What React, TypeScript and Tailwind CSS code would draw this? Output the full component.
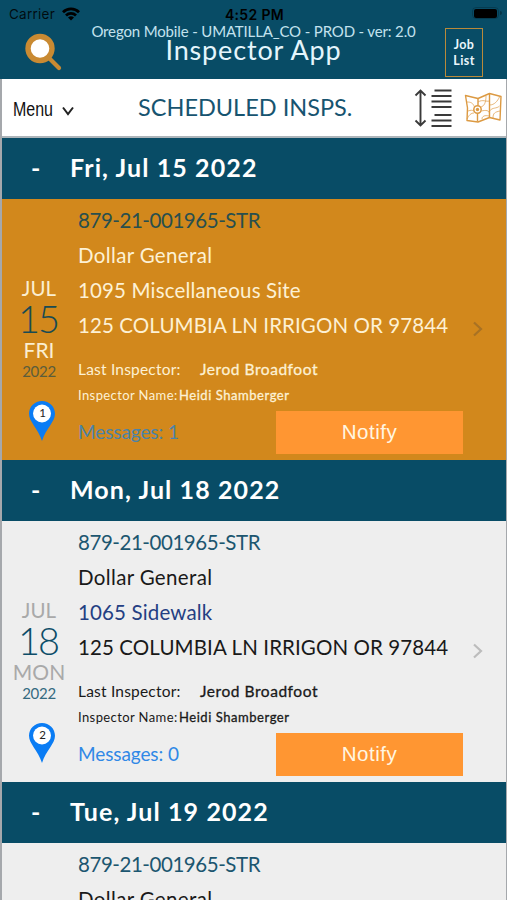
import clsx from 'clsx';

interface Inspection {
  heading: string;
  month: string;
  day: string;
  weekday: string;
  year: string;
  record: string;
  business: string;
  site: string;
  address: string;
  lastInspector: string;
  inspectorName: string;
  messages: number;
  pin: number;
  selected?: boolean;
}

const shared = {
  month: 'JUL',
  year: '2022',
  record: '879-21-001965-STR',
  business: 'Dollar General',
  address: '125 COLUMBIA LN IRRIGON OR 97844',
  lastInspector: 'Jerod Broadfoot',
  inspectorName: 'Heidi Shamberger',
};

const inspections: Inspection[] = [
  { ...shared, heading: 'Fri, Jul 15 2022', day: '15', weekday: 'FRI', site: '1095 Miscellaneous Site', messages: 1, pin: 1, selected: true },
  { ...shared, heading: 'Mon, Jul 18 2022', day: '18', weekday: 'MON', site: '1065 Sidewalk', messages: 0, pin: 2 },
  { ...shared, heading: 'Tue, Jul 19 2022', day: '19', weekday: 'TUE', site: '1065 Sidewalk', messages: 0, pin: 3 },
];

function StatusBar() {
  return (
    <div className="flex h-[26px] items-center justify-between pl-[9px] pr-[5px] font-['Inter',sans-serif] text-black">
      <div className="flex w-[150px] items-center gap-[7px] pt-[2px]">
        <span className="text-[13.5px] tracking-[0.25px] text-black/85">Carrier</span>
        <svg width="18" height="14" viewBox="0 0 18 14" fill="none" stroke="currentColor" strokeWidth="2.8">
          <path d="M1 5.2a11.4 11.4 0 0 1 16 0" />
          <path d="M4 8.4a7.2 7.2 0 0 1 10 0" />
          <path d="M9 13.6 6 10.6a4.3 4.3 0 0 1 6 0z" fill="currentColor" stroke="none" />
        </svg>
      </div>
      <span className="pt-[2px] pr-[2px] text-[14px] font-semibold tracking-[0.35px]">4:52 PM</span>
      <div className="flex w-[150px] items-center justify-end">
        <div className="flex h-[12px] w-[27px] items-center justify-center rounded-[4px] border border-black/20">
          <div className="h-[9px] w-[23px] rounded-[2px] bg-black" />
        </div>
        <div className="ml-px h-1 w-[2px] rounded-r bg-black/30" />
      </div>
    </div>
  );
}

function Header() {
  return (
    <header className="h-[79px] bg-[#084c66]">
      <StatusBar />
      <div className="flex h-[53px] justify-between pl-[24px] pr-[24px]">
        <svg className="mt-[6px] shrink-0" width="38" height="40" viewBox="0 0 38 40" fill="none">
          <path d="m25 26 10 10" stroke="#c98a32" strokeWidth="4.2" strokeLinecap="round" />
          <circle cx="16" cy="16.5" r="12" fill="#fff" stroke="#c98a32" strokeWidth="5.4" />
        </svg>
        <div className="-mt-[3px] flex flex-col items-center whitespace-nowrap text-[#c3e2ee]">
          <span className="text-[15px] leading-[16px] tracking-[-0.15px]">Oregon Mobile - UMATILLA_CO - PROD - ver: 2.0</span>
          <h1 className="text-[27px] leading-[22px] tracking-[0.85px] text-[#e4f5fc]">Inspector App</h1>
        </div>
        <button className="mt-[2px] h-[49px] w-[38px] border border-[#b98a3a] text-center text-[12.5px] font-bold leading-[16px] tracking-[0.4px] text-[#eaf6fb]">
          Job<br />List
        </button>
      </div>
    </header>
  );
}

function SortIcon() {
  return (
    <svg width="38" height="40" viewBox="0 0 38 40" fill="none" stroke="#3a3a3a" strokeWidth="1.9">
      <path d="M6.5 3v34M1.5 7.5l5-5 5 5M1.5 32.5l5 5 5-5" />
      <path d="M20.5 2.5h17M17.5 8h20M17.5 13.5h20M17.5 19h20M20.5 27h17M17.5 32.500h20M17.5 38h20" />
    </svg>
  );
}

function MapIcon() {
  return (
    <svg width="38" height="32" viewBox="0 0 38 32" fill="none" stroke="#dc9a43" strokeWidth="1.4" strokeLinejoin="round">
      <path d="M1.5 3.5 14 6.500 25.500 1.500 37 4.500 36 28 25.500 25.500 14 30 3 28.500 3.500 16z" />
      <path d="M14 6.500v7M13.500 21v8.500M25.500 1.500v24" />
      <circle cx="13.500" cy="17.500" r="3.700" strokeWidth="1.500" />
      <circle cx="13.500" cy="17.500" r="1.700" fill="#dc9a43" stroke="none" />
      <path d="M3 10c4 0 6 1 7.500 5M4 19c3-1 4-1 6 0M3 27c2-4 4-6 7-6M17 15c3-1 5-4 5-11M17.500 19c4-1 8-1 8 3M14 10c5-3 8 0 11.500-1M25.500 13c5 0 8-4 10-8M25.500 19c3-4 7-2 10-5M29 26c0-5 2-6 7-7M18 27c0-3 3-4 7-3" strokeWidth=".7" />
    </svg>
  );
}

function Toolbar() {
  return (
    <div className="flex h-[59px] items-center border-b-2 border-[#adb5ba] bg-white">
      <button className="flex w-[127px] items-center pl-[11px] pt-[4px]">
        <span className="w-[40px] origin-left scale-x-[0.82] font-['Liberation_Sans',sans-serif] text-[19.5px] text-[#111]">Menu</span>
        <svg className="ml-[9px] mt-[2px]" width="12" height="10" viewBox="0 0 12 10" fill="none" stroke="#222" strokeWidth="2">
          <path d="m1 1.5 5 6.500 5-6.500" />
        </svg>
      </button>
      <h2 className="w-[232px] whitespace-nowrap pl-[9px] pt-px text-[23.5px] text-[#175470]">SCHEDULED INSPS.</h2>
      <div className="ml-auto flex items-center gap-[12px] pr-[4px]">
        <SortIcon />
        <MapIcon />
      </div>
    </div>
  );
}

function MapPin({ label }: { label: number }) {
  return (
    <svg className="ml-[5px] mt-[20px]" width="28" height="42" viewBox="0 0 28 42">
      <path d="M14 1C6.7 1 1 6.7 1 13.7 1 22 10 28 14 41c4-13 13-19 13-27.3C27 6.7 21.3 1 14 1z" fill="#0a7cf4" />
      <circle cx="14" cy="13.5" r="9" fill="#fff" />
      <text x="14.5" y="17" textAnchor="middle" fontSize="11.5" fill="#222" fontFamily="Lato, sans-serif">{label}</text>
    </svg>
  );
}

function InspectionCard({ item }: { item: Inspection }) {
  const main = item.selected ? 'text-[#fdf1d4]' : 'text-[#191919]';
  const muted = item.selected ? 'text-[#fbeed0]' : 'text-[#a9a9a9]';

  return (
    <section className="h-[322px]">
      <div className="flex h-[61px] items-center bg-[#084c66] pb-px font-bold text-white">
        <span className="w-[68px] pl-[29px] text-[25px]">-</span>
        <h3 className="whitespace-nowrap text-[25px] tracking-[1.1px]">{item.heading}</h3>
      </div>

      <div className={clsx('flex h-[261px]', item.selected ? 'bg-[#d2881c]' : 'bg-[#eee]')}>
        {/* Date column */}
        <div className="flex w-[76px] flex-col items-center pr-[2px] pt-[77px]">
          <span className={clsx('text-[20.5px] leading-[24px]', muted)}>{item.month}</span>
          <span className={clsx('pr-[2px] text-[38px] font-light leading-[37px] tracking-[-2px]', item.selected ? 'text-[#184b53]' : 'text-[#0d4d68]')}>{item.day}</span>
          <span className={clsx('text-[21px] leading-[25px]', muted)}>{item.weekday}</span>
          <span className={clsx('mt-px text-[15px] leading-[17px] tracking-[-0.3px]', item.selected ? 'text-[#5b5d3b]' : 'text-[#356a80]')}>{item.year}</span>
          <MapPin label={item.pin} />
        </div>

        {/* Details */}
        <div className="flex w-[386px] flex-col whitespace-nowrap">
          <p className={clsx('mt-[4px] text-[20.5px] leading-[35px] tracking-[-0.45px]', item.selected ? 'text-[#284f4e]' : 'text-[#1c5670]')}>{item.record}</p>
          <p className={clsx('text-[20.5px] leading-[35px] tracking-[0.35px]', main)}>{item.business}</p>
          <p className={clsx('text-[20.5px] leading-[35px] tracking-[0.15px]', item.selected ? 'text-[#fdf1d4]' : 'text-[#243f83]')}>{item.site}</p>
          <p className={clsx('text-[20.5px] leading-[35px] tracking-[0.1px]', main)}>{item.address}</p>
          <div className={clsx('mt-[14px] flex h-[26px] items-center text-[15.5px]', main)}>
            <span className="w-[122px] tracking-[0.2px]">Last Inspector:</span>
            <span className="tracking-[0.55px] [-webkit-text-stroke:0.3px]">{item.lastInspector}</span>
          </div>
          <div className={clsx('flex h-[26px] items-center text-[13px]', main)}>
            <span className="w-[101px] tracking-[0.4px]">Inspector Name:</span>
            <span className="tracking-[0.55px] [-webkit-text-stroke:0.3px]">{item.inspectorName}</span>
          </div>
          <div className="mt-[2px] flex items-center">
            <span className={clsx('w-[198px] text-[19px] tracking-[-0.1px]', item.selected ? 'text-[#4b83a8]' : 'text-[#3088e6]')}>Messages: {item.messages}</span>
            <button className="h-[43px] w-[187px] bg-[#ff9632] font-['Liberation_Sans',sans-serif] text-[20.5px] tracking-[0.5px] text-[#fff6e2]">Notify</button>
          </div>
        </div>

        <svg className="ml-[8px] mt-[122px]" width="12" height="16" viewBox="0 0 12 16" fill="none" stroke={item.selected ? '#a87224' : '#bcbcbc'} strokeWidth="2.2">
          <path d="m2 1.5 7 6.500-7 6.500" />
        </svg>
      </div>
    </section>
  );
}

export default function App() {
  return (
    <div className="h-[900px] w-[507px] overflow-hidden bg-[#084c66] font-['Lato',sans-serif]">
      <Header />
      <main className="border-l-2 border-r border-[#a5a8ac]">
        <Toolbar />
        {inspections.map((item) => (
          <InspectionCard key={item.heading} item={item} />
        ))}
      </main>
    </div>
  );
}
